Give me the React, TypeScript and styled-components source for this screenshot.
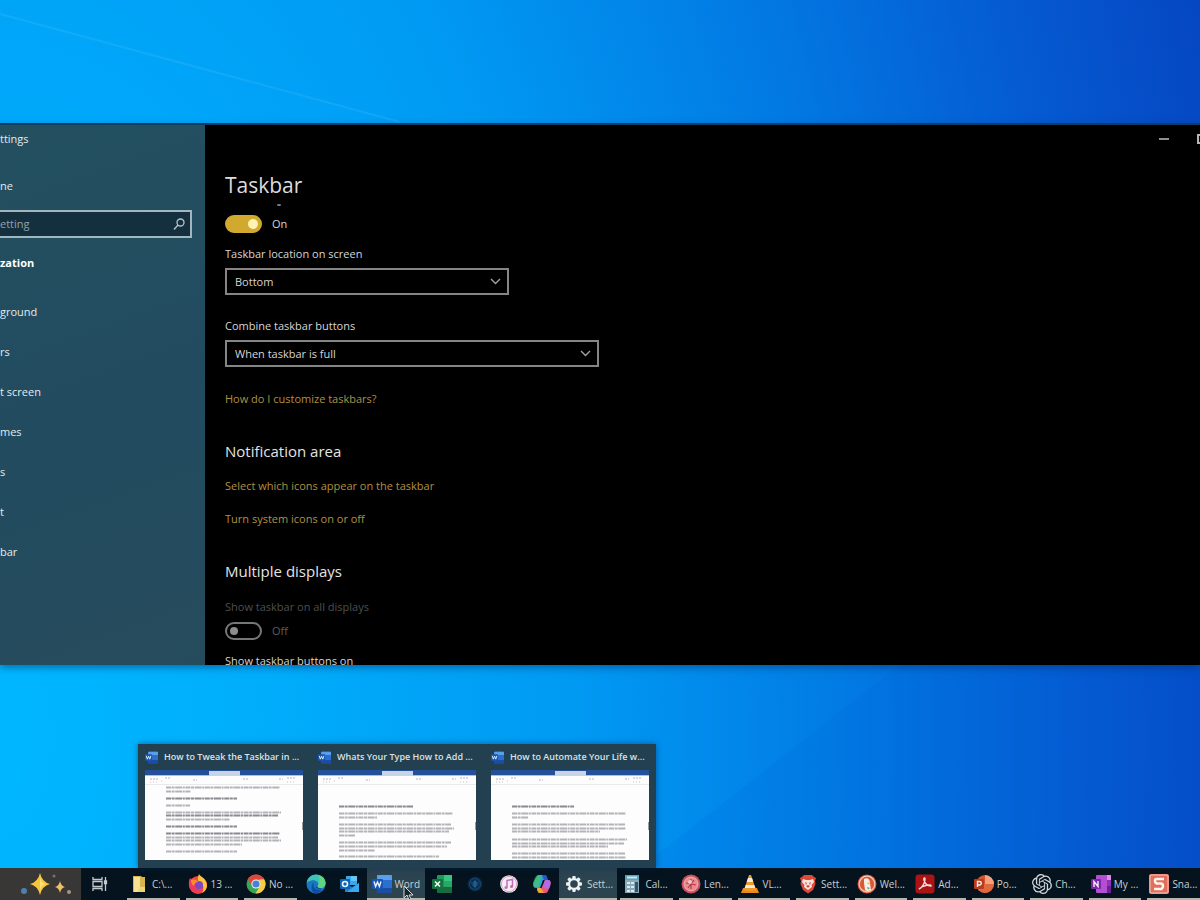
import React from "react";
import styled, { createGlobalStyle, css } from "styled-components";
import { SiOpenai } from "react-icons/si";

const GlobalStyle = createGlobalStyle`
  *, *::before, *::after { box-sizing: border-box; }
  body { margin: 0; overflow: hidden; }
  body, input, select, button {
    font-family: "Open Sans", "Noto Sans", sans-serif;
    font-size: 11px;
    line-height: 16px;
  }
  h1, h2, p, ul { margin: 0; padding: 0; }
  ul { list-style: none; }
`;

/* ---------- desktop ---------- */

const Desktop = styled.div`
  position: relative;
  display: flex;
  flex-direction: column;
  justify-content: space-between;
  height: 100vh;
  overflow: hidden;
  background: radial-gradient(
    ellipse 106% 260% at 0% 82%,
    #00b7ff 0%,
    #00aefc 20%,
    #009af3 45%,
    #0278e2 68%,
    #055bd2 85%,
    #0546c2 100%
  );
`;

const Rays = styled.svg`
  position: absolute;
  inset: 0;
  width: 100%;
  height: 100%;
`;

/* ---------- settings window ---------- */

const SettingsWindow = styled.section`
  position: relative;
  display: flex;
  height: 60vh;
  margin-top: 125px;
  overflow: hidden;
  background: #000;
  box-shadow: 0 -2px 0 #0b3d62, 0 2px 8px rgba(0, 30, 80, 0.5);
`;

const Sidebar = styled.aside`
  flex: 0 0 205px;
  background: linear-gradient(160deg, #23505f, #224b60 50%, #264c5c);
  color: #e2ebee;
`;

const WindowName = styled.p`
  line-height: 28px;
`;

const HomeLink = styled.a`
  display: block;
  margin-top: 25px;
  color: inherit;
  text-decoration: none;
`;

const SearchBox = styled.label`
  display: flex;
  align-items: center;
  height: 28px;
  margin: 16px 13px 0 0;
  padding-right: 5px;
  border: 2px solid #a4b6bd;
  border-left: 0;
  background: #14303f;
  color: #b9c6cb;
`;

const SearchInput = styled.input`
  flex: 1;
  min-width: 0;
  padding: 0;
  border: 0;
  outline: 0;
  background: transparent;
  color: #fff;
  &::placeholder { color: #92a2a9; opacity: 1; }
`;

const SidebarHeading = styled.h2`
  margin-top: 17px;
  font-size: 11px;
  font-weight: 700;
  line-height: 16px;
  color: #fff;
`;

const SidebarNav = styled.nav`
  display: flex;
  flex-direction: column;
  margin-top: 21px;
`;

const SidebarLink = styled.a`
  line-height: 40px;
  color: inherit;
  text-decoration: none;
  white-space: nowrap;
`;

const Page = styled.main`
  flex: 1;
  min-width: 0;
  color: #d6d6d6;
`;

const Caption = styled.div`
  display: flex;
  justify-content: flex-end;
  gap: 12px;
  height: 28px;
  margin-right: -15px;
`;

const CaptionButton = styled.button`
  display: grid;
  place-items: center;
  width: 26px;
  padding: 0;
  border: 0;
  background: none;
  color: #b5b5b5;
`;

const Content = styled.div`
  display: flex;
  flex-direction: column;
  align-items: flex-start;
  padding: 16px 20px 0;
`;

const PageTitle = styled.h1`
  font-size: 21px;
  font-weight: 400;
  line-height: 32px;
  color: #dcdcdc;
`;

const ScrolledText = styled.span`
  width: 4px;
  height: 2px;
  margin: 3px 0 0 52px;
  border-radius: 1px;
  background: #777;
`;

const ToggleRow = styled.label<{ $muted?: boolean }>`
  display: flex;
  align-items: center;
  gap: 10px;
  height: 18px;
  margin-top: ${(p) => (p.$muted ? 7 : 9)}px;
  color: ${(p) => (p.$muted ? "#5c5c5c" : "#d6d6d6")};
`;

const Toggle = styled.input`
  appearance: none;
  display: flex;
  align-items: center;
  width: 37px;
  height: 18px;
  margin: 0;
  padding: 0 3px;
  border: 2px solid #777;
  border-radius: 9px;
  &::before {
    content: "";
    width: 8px;
    height: 8px;
    border-radius: 50%;
    background: #8c8c8c;
  }
  &:checked {
    justify-content: flex-end;
    padding: 0 2px;
    border-color: #d2a92f;
    background: #d2a92f;
  }
  &:checked::before {
    width: 10px;
    height: 10px;
    background: #fff3b4;
  }
`;

const Field = styled.div<{ $wide?: boolean }>`
  position: relative;
  display: flex;
  flex-direction: column;
  gap: 6px;
  width: ${(p) => (p.$wide ? 374 : 284)}px;
  max-width: 100%;
  margin-top: ${(p) => (p.$wide ? 23 : 13)}px;
`;

const Select = styled.select`
  appearance: none;
  height: 27px;
  padding: 0 28px 0 8px;
  border: 2px solid #858585;
  border-radius: 0;
  background: #000;
  color: #d6d6d6;
`;

const Chevron = styled.svg`
  position: absolute;
  right: 8px;
  bottom: 10px;
  pointer-events: none;
`;

const TextLink = styled.a<{ $gap: number }>`
  margin-top: ${(p) => p.$gap}px;
  color: #b09140;
  text-decoration: none;
`;

const SectionTitle = styled.h2`
  margin-top: 32px;
  font-size: 15px;
  font-weight: 500;
  line-height: 24px;
  color: #e4e4e4;
`;

const Label = styled.p<{ $muted?: boolean }>`
  margin-top: ${(p) => (p.$muted ? 16 : 13)}px;
  color: ${(p) => (p.$muted ? "#4f4f4f" : "#d6d6d6")};
`;

/* ---------- task bar ---------- */

const Taskbar = styled.footer`
  position: relative;
  display: flex;
  height: 32px;
  background: #04131e;
  color: #c9d0d4;
`;

const Highlights = styled.button`
  flex: 0 0 81px;
  padding: 0;
  border: 0;
  background: #393735;
`;

const TaskView = styled.button`
  display: grid;
  place-items: center;
  flex: 0 0 37px;
  padding: 0;
  border: 0;
  background: none;
`;

const Apps = styled.ul`
  display: flex;
  flex: 1;
  min-width: 0;
  margin: 0 -3px 0 6px;
`;

const AppItem = styled.li<{ $narrow?: boolean }>`
  display: flex;
  flex: ${(p) => (p.$narrow ? 4 : 7)} 1 0;
  min-width: 0;
`;

const AppButton = styled.button<{ $active?: boolean; $open?: boolean }>`
  position: relative;
  display: flex;
  align-items: center;
  justify-content: ${(p) => (p.$open ? "flex-start" : "center")};
  gap: 3px;
  flex: 1;
  min-width: 0;
  padding: 0 ${(p) => (p.$open ? 5 : 0)}px;
  border: 0;
  background: ${(p) => (p.$active ? "#2c444f" : "none")};
  color: inherit;
  font-size: 10px;
  white-space: nowrap;
  svg { flex: none; }
  ${(p) =>
    p.$open &&
    css`
      &::after {
        content: "";
        position: absolute;
        right: ${p.$active ? 0 : 3}px;
        bottom: 0;
        left: ${p.$active ? 0 : 3}px;
        height: 2px;
        background: #b3b7a9;
      }
    `}
`;

const Pointer = styled.svg`
  position: absolute;
  bottom: 0;
  left: 403px;
  pointer-events: none;
`;

/* ---------- window previews ---------- */

const Previews = styled.ul`
  position: absolute;
  bottom: 32px;
  left: 138px;
  display: flex;
  gap: 15px;
  width: 518px;
  height: 124px;
  padding: 5px 7px 8px !important;
  background: #22404f;
  box-shadow: 0 0 6px rgba(0, 40, 90, 0.55);
`;

const Preview = styled.li`
  display: flex;
  flex: 1;
  flex-direction: column;
  gap: 5px;
  min-width: 0;
`;

const PreviewTitle = styled.p`
  display: flex;
  align-items: center;
  gap: 6px;
  font-size: 9px;
  font-weight: 600;
  color: #dbe2e5;
  white-space: nowrap;
  svg { flex: none; }
`;

const Thumb = styled.svg`
  display: block;
  width: 100%;
  height: 90px;
`;

/* ---------- icons ---------- */

const Svg = ({ s = 20, children }: { s?: number; children: React.ReactNode }) => (
  <svg width={s} height={s} viewBox="0 0 20 20" aria-hidden="true">{children}</svg>
);

const Folder = () => (
  <Svg>
    <path d="M4 2h8l1 1h3v15H4z" fill="#d9b44d" />
    <path d="M5 3h6v12l-2 3H5z" fill="#f8e192" />
    <path d="M11 13h5v5h-7z" fill="#efd377" />
  </Svg>
);

const Firefox = () => (
  <Svg>
    <circle cx="10" cy="11" r="9" fill="#f2453f" />
    <path d="M11 0c1 3 8 4 8 12a9 9 0 0 1-5 7c3-6 1-9-3-11-2-2-1-5 0-8z" fill="#ffc43b" />
    <path d="M2 4c1 1 2 2 4 2l4 2-3 2c1 5 6 5 8 2 0 5-4 7-8 6-5-1-8-7-5-14z" fill="#ec3a5f" />
    <circle cx="11" cy="11" r="4" fill="#7b47c9" />
    <path d="M3 6c3-1 6 0 7 2-2 0-4 2-4 4-2-1-3-3-3-6z" fill="#ff8a2e" />
  </Svg>
);

const Chrome = () => (
  <Svg>
    <circle cx="10" cy="10" r="9.5" fill="#3aa655" />
    <path d="M10 .5a9.500 9.500 0 0 1 8.200 4.700L10 5.500 6 12 1.800 5.200A9.500 9.500 0 0 1 10 .5z" fill="#e0473b" />
    <path d="M18.200 5.200A9.500 9.500 0 0 1 9.500 19.500L14 12l-1-6.500z" fill="#f7cb45" />
    <circle cx="10" cy="10" r="4.600" fill="#f4f4f4" />
    <circle cx="10" cy="10" r="3.600" fill="#4a80d8" />
  </Svg>
);

const Edge = () => (
  <Svg>
    <circle cx="10" cy="10" r="9.500" fill="#1977c4" />
    <path d="M.6 9C1.500 3.500 5.500.5 10 .5c5.500 0 9.500 4 9.500 8.500 0 3-2 5-5 5-2 0-3.500-1-2.500-2.500C13.500 8 9 5.500 5.500 6.500 3 7 1.500 8 .6 9z" fill="#3ec3b6" />
    <path d="M12 1c5 1 7.500 4.500 7.500 8 0 3-2 5-5 5-2 0-3.500-1-2.500-2.500C14.500 8 13 3 12 1z" fill="#62d37f" />
    <path d="M8 8c-2 5 2 9 8 7.500-1 2-4 4-6 4-5 0-6-8-2-11.500z" fill="#0f4fa0" />
    <path d="M10 9.500c-1 4 3 5.500 6 4.500-2 1-5 1-6-1z" fill="#0a2e55" />
  </Svg>
);

const Outlook = () => (
  <Svg>
    <path d="M6 2h11v9H6z" fill="#3aa7e8" />
    <path d="M11 2h6v5h-6z" fill="#65c7f5" />
    <path d="M5 9l7 4 7-4v9H5z" fill="#1b82d1" />
    <path d="M19 9v9H7z" fill="#3ba9ea" />
    <rect x="0" y="5" width="10" height="10" rx="1" fill="#0d63b5" />
    <circle cx="5" cy="10" r="2.500" fill="none" stroke="#e8f4fd" strokeWidth="1.600" />
  </Svg>
);

const Word = ({ s }: { s?: number }) => (
  <Svg s={s}>
    <rect x="5" y="1" width="15" height="18" rx="1" fill="#2c70cf" />
    <path d="M5 2a1 1 0 0 1 1-1h13a1 1 0 0 1 1 1v4H5z" fill="#58a0ec" />
    <path d="M5 14h15v4a1 1 0 0 1-1 1H6a1 1 0 0 1-1-1z" fill="#1b4da3" />
    <rect x="0" y="5" width="11" height="10" rx="1" fill="#1b55b4" />
    <path d="M2 7.500l1.600 5 1.900-4.500 1.900 4.500 1.600-5" fill="none" stroke="#eaf2fd" strokeWidth="1.400" />
  </Svg>
);

const Excel = () => (
  <Svg>
    <rect x="5" y="1" width="15" height="18" rx="1" fill="#1f9a55" />
    <path d="M12 1h8v6h-8z" fill="#39c481" />
    <path d="M5 13h15v6H5z" fill="#176b3d" />
    <path d="M12 7h8v6h-8z" fill="#2aa765" />
    <rect x="0" y="5" width="11" height="10" rx="1" fill="#13723f" />
    <path d="M3 7.500l5 5M8 7.500l-5 5" stroke="#f0fbf4" strokeWidth="1.600" />
  </Svg>
);

const BlueOrb = () => (
  <Svg>
    <circle cx="10" cy="10" r="7.500" fill="#0a2742" />
    <circle cx="10" cy="10" r="5.500" fill="none" stroke="#12406a" strokeWidth="1.500" />
    <path d="M6 9h8M7 11h6M9 7h2v6H9z" stroke="#1d5f92" fill="#1d5f92" />
  </Svg>
);

const Music = () => (
  <Svg>
    <circle cx="10" cy="10" r="8.800" fill="#f4eef4" />
    <circle cx="10" cy="10" r="7.600" fill="none" stroke="#dfa0c4" strokeWidth="1" />
    <path d="M8 13.500V6.500l5.500-1v7" fill="none" stroke="#b872bd" strokeWidth="1.500" />
    <circle cx="7" cy="13.500" r="1.500" fill="#b872bd" />
    <circle cx="12.500" cy="12.500" r="1.500" fill="#d85f96" />
  </Svg>
);

const Copilot = () => (
  <Svg>
    <path d="M6 1h7l2 5h-4L8 14H4c-3 0-3-3-2-6z" fill="#2f9ee0" />
    <path d="M3 4C4 2 5 1 7 1h3L7 13H3c-3-1-2-5 0-9z" fill="#45c46f" opacity=".75" />
    <path d="M13 6h3c3 0 3 3 2 6l-2 5c-1 2-2 2-4 2H7l-2-4h4z" fill="#e8577d" />
    <path d="M13 6h3c3 0 3 3 2 6l-1 3-6-2z" fill="#b46be2" />
    <path d="M5 14h4l3 5H8c-2 0-3-2-3-5z" fill="#f6a33c" />
    <path d="M10 1h3c2 0 2 2 3 5h-4z" fill="#2757cf" />
  </Svg>
);

const Gear = () => (
  <Svg>
    <g fill="#edf1f2">
      {[0, 45, 90, 135].map((a) => (
        <rect key={a} x="8.300" y="2" width="3.400" height="16" rx="1" transform={`rotate(${a} 10 10)`} />
      ))}
      <circle cx="10" cy="10" r="6" />
    </g>
    <circle cx="10" cy="10" r="3.800" fill="#2c444f" />
  </Svg>
);

const Calculator = () => (
  <Svg>
    <rect x="3" y="1" width="14" height="18" fill="#8aa9b9" />
    <rect x="3" y="1" width="14" height="5" fill="#5fa3bb" />
    <rect x="5" y="2.500" width="10" height="2" fill="#c8e6ee" />
    <g fill="#dce8ee">
      <path d="M5 8h3v2H5zM9 8h3v2H9zM5 12h3v2H5zM9 12h3v2H9zM5 16h3v2H5zM9 16h3v2H9z" />
    </g>
    <path d="M13 8h3v10h-3z" fill="#34546b" />
  </Svg>
);

const Lens = () => (
  <Svg>
    <circle cx="10" cy="10" r="9.500" fill="#c9505b" />
    <circle cx="10" cy="10" r="7" fill="#e88a90" stroke="#f0b0b4" />
    <path d="M10 5v10M5 9l10 2M13 6l-6 8" stroke="#b23a4a" strokeWidth="1.200" />
    <circle cx="9" cy="8" r="2" fill="#f7c7c7" />
  </Svg>
);

const Cone = () => (
  <Svg>
    <path d="M3 14h14l2 5H1z" fill="#e78a1e" />
    <path d="M9 1h2l5 15q-6 2-12 0z" fill="#f29a2b" />
    <path d="M8 4h4l1.300 4H6.700zM5.700 11h8.600l1 3H4.700z" fill="#f5ede0" />
  </Svg>
);

const Brave = () => (
  <Svg>
    <path d="M6 1h8l2 2 2 1-1 3 .5 3-2.500 6-5 3.500L5 16 2.500 10 3 7 2 4l2-1z" fill="#dd4a3a" />
    <path d="M5 5l3 1h4l3-1 1 3-2.500 3 .5 2-4 3-4-3 .5-2L4 8z" fill="#f7e3dd" />
    <path d="M7 8l2 1-1 2zM13 8l-2 1 1 2zM8 12l2-1 2 1-2 2z" fill="#dd4a3a" />
  </Svg>
);

const Duck = () => (
  <Svg>
    <circle cx="10" cy="10" r="9.500" fill="#d9573a" />
    <circle cx="10" cy="10" r="7.800" fill="none" stroke="#f3cdb9" strokeWidth="1.200" />
    <path d="M7 5c3-2 6 0 6 4l1 7q-4 2-6 0L7 9z" fill="#f6efe4" />
    <path d="M10 8.500l4 .5-3 1.500z" fill="#f3b63a" />
    <path d="M10 13l3 1-2 1.500z" fill="#5aa84e" />
  </Svg>
);

const Acrobat = () => (
  <Svg>
    <rect x=".5" y=".5" width="19" height="19" rx="3" fill="#ab1414" />
    <path d="M4 15c3-1 6-6 6-10 0-2-2-1-1 1 1 4 4 6 7 6 1-2-8-1-12 3z" fill="none" stroke="#f6dcdc" strokeWidth="1.400" />
  </Svg>
);

const PowerPoint = () => (
  <Svg>
    <circle cx="11" cy="10" r="9" fill="#d35230" />
    <path d="M11 1a9 9 0 0 1 9 9h-9z" fill="#f6a17c" />
    <path d="M20 10a9 9 0 0 1-18 0z" fill="#e0693f" />
    <rect x="0" y="5" width="10" height="10" rx="1" fill="#b93c1c" />
    <path d="M3.500 13V7.500h2a1.700 1.700 0 0 1 0 3.500h-2" fill="none" stroke="#fdeee8" strokeWidth="1.400" />
  </Svg>
);

const OneNote = () => (
  <Svg>
    <rect x="5" y="1" width="15" height="18" rx="1" fill="#b44fd2" />
    <path d="M16 1h3a1 1 0 0 1 1 1v4h-4z" fill="#dc8df0" />
    <path d="M16 6h4v6h-4z" fill="#9232b8" />
    <path d="M16 12h4v6a1 1 0 0 1-1 1h-3z" fill="#6d1f97" />
    <rect x="0" y="5" width="10" height="10" rx="1" fill="#7a26a8" />
    <path d="M3 13V7.500l4 5V7" fill="none" stroke="#f7eafc" strokeWidth="1.400" />
  </Svg>
);

const Snagit = () => (
  <Svg>
    <rect x="0" y="0" width="20" height="20" rx="2" fill="#e0705c" />
    <rect x="1" y="1" width="18" height="18" rx="2" fill="none" stroke="#f0a798" strokeWidth="1.500" />
    <path d="M15 5H7.500Q6 5 6 7t1.500 2.500h5Q14 10 14 12t-1.500 3H5" fill="none" stroke="#fff2ed" strokeWidth="2.600" />
  </Svg>
);

const ChatGpt = () => <SiOpenai size={20} color="#d2d6d9" aria-hidden="true" />;

const Sparkles = () => (
  <svg width="81" height="32" viewBox="0 0 81 32" aria-hidden="true">
    <path d="M40 5q2 9 10 11-8 2-10 11-2-9-10-11 8-2 10-11z" fill="#f7c53a" />
    <path d="M40 9q1 6 6 7-5 1-6 7z" fill="#ffdf77" />
    <path d="M60 13q1 5 5 6-4 1-5 6-1-5-5-6 4-1 5-6z" fill="#ecc069" />
    <circle cx="24" cy="23" r="3" fill="#4f7fae" />
    <circle cx="54" cy="8" r="1.500" fill="#8b6a70" />
    <circle cx="69" cy="24" r="2" fill="#a8977d" />
  </svg>
);

const TaskViewIcon = () => (
  <svg width="16" height="14" viewBox="0 0 16 14" fill="none" stroke="#c3cace" strokeWidth="1.300" aria-hidden="true">
    <path d="M1 0v2.500h9V0M1 14v-2.500h9V14M1 4.500h9v5H1zM13.500 0v14" />
    <path d="M12.500 4h2v2.500h-2z" fill="#c3cace" />
  </svg>
);

/* ---------- data ---------- */

type App = { name: string; icon: React.ComponentType; text?: string; active?: boolean };

const apps: App[] = [
  { name: "File Explorer", icon: Folder, text: "C:\\..." },
  { name: "Firefox", icon: Firefox, text: "13 ..." },
  { name: "Chrome", icon: Chrome, text: "No ..." },
  { name: "Edge", icon: Edge },
  { name: "Outlook", icon: Outlook },
  { name: "Word", icon: Word, text: "Word", active: true },
  { name: "Excel", icon: Excel },
  { name: "Assistant", icon: BlueOrb },
  { name: "Music", icon: Music },
  { name: "Copilot", icon: Copilot },
  { name: "Settings", icon: Gear, text: "Sett...", active: true },
  { name: "Calculator", icon: Calculator, text: "Cal..." },
  { name: "Lens", icon: Lens, text: "Len..." },
  { name: "VLC", icon: Cone, text: "VL..." },
  { name: "Brave", icon: Brave, text: "Sett..." },
  { name: "DuckDuckGo", icon: Duck, text: "Wel..." },
  { name: "Adobe Acrobat", icon: Acrobat, text: "Ad..." },
  { name: "PowerPoint", icon: PowerPoint, text: "Po..." },
  { name: "ChatGPT", icon: ChatGpt, text: "Ch..." },
  { name: "OneNote", icon: OneNote, text: "My ..." },
  { name: "Snagit", icon: Snagit, text: "Sna..." },
];

const sections = ["ground", "rs", "t screen", "mes", "s", "t", "bar"];

/* Each line of a miniature page: top, width and whether it is bold. */
type Line = [number, number, boolean?];

const documents: { title: string; lines: Line[] }[] = [
  {
    title: "How to Tweak the Taskbar in ...",
    lines: [
      [17, 114], [21, 25], [28, 71, true], [35, 24], [42, 115], [45, 112, true], [49, 64],
      [56, 71, true], [63, 114, true], [67, 112], [70, 115], [74, 76], [81, 71],
    ],
  },
  {
    title: "Whats Your Type How to Add ...",
    lines: [
      [36, 74, true], [43, 114], [47, 38], [54, 112], [58, 115], [61, 110], [65, 16],
      [72, 112], [76, 108], [80, 36], [86, 100],
    ],
  },
  {
    title: "How to Automate Your Life w...",
    lines: [
      [36, 62, true], [43, 114], [47, 16], [54, 113], [58, 114], [61, 88],
      [69, 115], [73, 112], [76, 96], [83, 113], [87, 114],
    ],
  },
];

const Miniature = ({ lines }: { lines: Line[] }) => (
  <Thumb viewBox="0 0 158 90" preserveAspectRatio="none" aria-hidden="true">
    <rect width="158" height="90" fill="#fdfdfe" />
    <rect width="158" height="5" fill="#24509a" />
    <rect x="64" y="1" width="31" height="5" fill="#c8d3e6" />
    <path d="M0 5.500h64M95 5.500h63" stroke="#aebfdd" />
    <path d="M5 9h8M20 8h5M48 10h4M98 9h5M134 9h4M142 8h9" stroke="#aab6cf" strokeDasharray="2 1" />
    <path d="M5 12h7M16 11h3M142 12h9" stroke="#d9bfc4" strokeDasharray="1 2" />
    <path d="M0 14.500h158" stroke="#ece9ec" />
    {lines.map(([y, width, bold], i) => (
      <path
        key={i}
        d={`M21 ${y + 0.5}h${width}`}
        stroke={bold ? "#8a8a90" : "#b4b4b8"}
        strokeWidth={bold ? 2 : 1.8}
        strokeDasharray="5 .6 3 .6 7 .6 2 .6"
      />
    ))}
    <path d="M157.500 52v8" stroke="#9a9a9a" />
  </Thumb>
);

const DownChevron = () => (
  <Chevron width="11" height="7" viewBox="0 0 11 7" fill="none" stroke="#a2a2a2" strokeWidth="1.400" aria-hidden="true">
    <path d="M1 1l4.500 4.500L10 1" />
  </Chevron>
);

export default function App() {
  return (
    <>
      <GlobalStyle />
      <Desktop>
        <Rays viewBox="0 0 1200 900" preserveAspectRatio="none" aria-hidden="true">
          <path d="M0 22L410 124H0z" fill="#00a8ff" opacity=".15" />
          <path d="M0 14L400 122" stroke="#5cc4ff" strokeWidth="2" opacity=".2" />
          <path d="M640 868L900 665h300v203z" fill="#0058d4" opacity=".1" />
        </Rays>

        <SettingsWindow aria-label="Settings">
          <Sidebar>
            <WindowName>ttings</WindowName>
            <HomeLink href="#home">ne</HomeLink>
            <SearchBox>
              <SearchInput type="search" placeholder="etting" aria-label="Find a setting" />
              <svg width="12" height="12" viewBox="0 0 12 12" fill="none" stroke="currentColor" strokeWidth="1.300" aria-hidden="true">
                <circle cx="7.500" cy="4.500" r="3.500" />
                <path d="M5 7L1 11.500" />
              </svg>
            </SearchBox>
            <SidebarHeading>zation</SidebarHeading>
            <SidebarNav>
              {sections.map((name) => (
                <SidebarLink key={name} href={`#${name}`}>{name}</SidebarLink>
              ))}
            </SidebarNav>
          </Sidebar>

          <Page>
            <Caption>
              <CaptionButton aria-label="Minimize">
                <svg width="10" height="2" aria-hidden="true"><rect width="10" height="2" fill="#8f8f8f" /></svg>
              </CaptionButton>
              <CaptionButton aria-label="Maximize">
                <svg width="10" height="10" aria-hidden="true">
                  <rect x="1" y="1" width="8" height="8" fill="none" stroke="currentColor" strokeWidth="2" />
                </svg>
              </CaptionButton>
            </Caption>
            <Content>
              <PageTitle>Taskbar</PageTitle>
              <ScrolledText />
              <ToggleRow>
                <Toggle type="checkbox" role="switch" defaultChecked />
                On
              </ToggleRow>
              <Field>
                <label htmlFor="location">Taskbar location on screen</label>
                <Select id="location"><option>Bottom</option></Select>
                <DownChevron />
              </Field>
              <Field $wide>
                <label htmlFor="combine">Combine taskbar buttons</label>
                <Select id="combine"><option>When taskbar is full</option></Select>
                <DownChevron />
              </Field>
              <TextLink href="#customize" $gap={24}>How do I customize taskbars?</TextLink>
              <SectionTitle>Notification area</SectionTitle>
              <TextLink href="#icons" $gap={15}>Select which icons appear on the taskbar</TextLink>
              <TextLink href="#system-icons" $gap={17}>Turn system icons on or off</TextLink>
              <SectionTitle>Multiple displays</SectionTitle>
              <Label $muted id="all-displays">Show taskbar on all displays</Label>
              <ToggleRow $muted>
                <Toggle type="checkbox" role="switch" disabled aria-describedby="all-displays" />
                Off
              </ToggleRow>
              <Label>Show taskbar buttons on</Label>
            </Content>
          </Page>
        </SettingsWindow>

        <Taskbar>
          <Highlights aria-label="Search highlights"><Sparkles /></Highlights>
          <TaskView aria-label="Task view"><TaskViewIcon /></TaskView>
          <Apps>
            {apps.map(({ name, icon: Icon, text, active }) => (
              <AppItem key={name} $narrow={!text}>
                <AppButton aria-label={name} $open={!!text} $active={active}>
                  <Icon />
                  {text}
                </AppButton>
              </AppItem>
            ))}
          </Apps>
          <Pointer width="11" height="15" viewBox="0 0 11 15" aria-hidden="true">
            <path d="M1 1v12l3-3 2 5 2-1-2-4h4z" fill="#16242c" stroke="#d5dadc" />
          </Pointer>
        </Taskbar>

        <Previews>
          {documents.map(({ title, lines }) => (
            <Preview key={title}>
              <PreviewTitle>
                <Word s={13} />
                {title}
              </PreviewTitle>
              <Miniature lines={lines} />
            </Preview>
          ))}
        </Previews>
      </Desktop>
    </>
  );
}
